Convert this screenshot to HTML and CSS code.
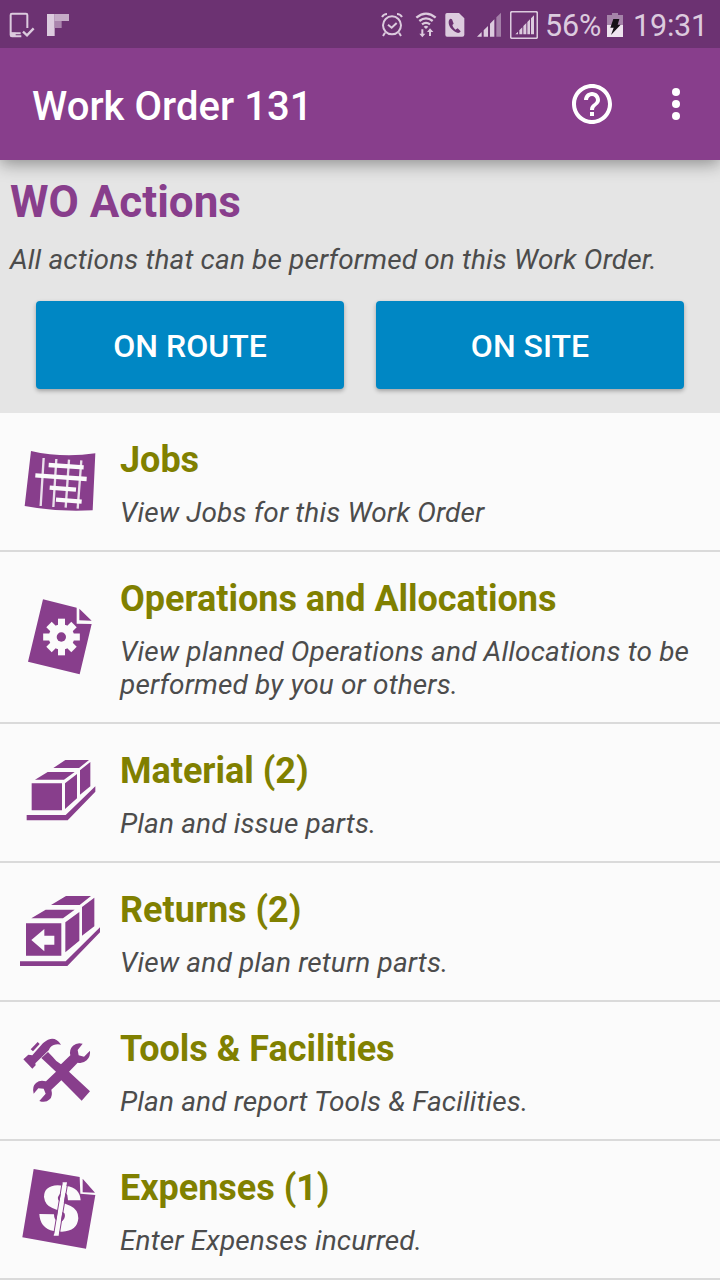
FILE: index.html
```html
<!DOCTYPE html>
<html lang="en">
<head>
<meta charset="utf-8">
<title>Work Order 131</title>
<link rel="stylesheet" href="styles.css">
</head>
<body>
<div class="status">
  <svg class="st-device" width="26" height="26" viewBox="28 36 78 78"><path d="M83 84V45q0-4-4-4H37q-4 0-4 4v60q0 4 4 4h28M33 100h30" fill="none" stroke="currentColor" stroke-width="6"/><path d="M33 98h15v11H33z" fill="currentColor"/><path d="M70 95l12 11 20-21" fill="none" stroke="currentColor" stroke-width="7"/></svg>
  <svg class="st-flip" width="22" height="22" viewBox="141 42 66 66"><path d="M141 42h23v66h-23z" fill="#dccbde"/><path d="M164 42h43v21h-43z" fill="#c5abc7"/><path d="M164 63h21v21h-21z" fill="#aa85ad"/></svg>
  <span class="spacer"></span>
  <svg class="st-alarm" width="24" height="26" viewBox="22 36 72 78"><g fill="none" stroke="currentColor" stroke-width="6"><circle cx="58" cy="76" r="27"/><path d="M28 51q5-9 15-9M88 51q-5-9-15-9"/><path d="M37 98l-6 10M79 98l6 10M46 74l11 9 15-14"/></g></svg>
  <svg class="st-wifi" width="24" height="26" viewBox="127 36 72 78"><g fill="none" stroke="currentColor" stroke-width="7"><path d="M134 53q29-24 58 0M143 63q20-16 40 0M151 73q12-9 24 0"/></g><path d="M156 80q7-6 14 0l-7 7zM149 88h6v13h6l-9 11-9-11h6zM172 108h6V96h7l-10-11-9 11h6z" fill="currentColor"/></svg>
  <svg class="st-sim" width="20" height="26" viewBox="221 36 60 78"><path d="M227 39h36l16 16v49q0 6-6 6h-46q-5 0-5-6V44q0-5 5-5z" fill="currentColor"/><path d="M237 56c-8 5-6 20 4 31s22 16 27 7l-9-9-7 4q-8-6-9-14l4-4-5-13z" fill="#6c3272"/></svg>
  <svg class="st-sig" width="26" height="26" viewBox="315 36 78 78"><path d="M318 110l14-14v14zM338 91l13-13v32h-13zM357 71l13-13v52h-13z" fill="currentColor"/><path d="M376 52l14-14v72h-14z" fill="currentColor" opacity=".5"/></svg>
  <svg class="st-sig2" width="28" height="28" viewBox="418 33 84 84"><rect x="420" y="35" width="80" height="80" rx="5" fill="none" stroke="currentColor" stroke-width="5"/><path d="M434 103l8-8v8zM446 91l9-9v21h-9zM458 78l9-9v34h-9zM470 66l8-8v45h-8zM481 55l9-9v57h-9z" fill="currentColor"/></svg>
  <span class="pct">56%</span>
  <svg class="st-bat" width="16" height="24" viewBox="231 39 48 72"><path d="M231 45h15v-6h18v6h15v30h-48z" fill="#a583a9"/><path d="M231 75h48v36h-48z" fill="#eee4ef"/><path d="M250 57h18l-5 17h9l-29 31 8-22h-10z" fill="#151116"/></svg>
  <span class="clock">19:31</span>
</div>
<header class="bar">
  <h1>Work Order 131</h1>
  <svg width="40" height="40" viewBox="2 2 20 20" class="help"><path fill="currentColor" d="M11 18h2v-2h-2v2zm1-16C6.480 2 2 6.480 2 12s4.480 10 10 10 10-4.480 10-10S17.520 2 12 2zm0 18c-4.410 0-8-3.590-8-8s3.590-8 8-8 8 3.590 8 8-3.590 8-8 8zm0-14c-2.210 0-4 1.790-4 4h2c0-1.100.9-2 2-2s2 .9 2 2c0 2-3 1.750-3 5h2c0-2.250 3-2.500 3-5 0-2.210-1.790-4-4-4z"/></svg>
  <svg width="8" height="32" viewBox="0 0 8 32" class="more"><g fill="currentColor"><circle cx="4" cy="4" r="4"/><circle cx="4" cy="16" r="4"/><circle cx="4" cy="28" r="4"/></g></svg>
</header>
<section class="actions">
  <h2>WO Actions</h2>
  <p class="desc">All actions that can be performed on this Work Order.</p>
  <div class="buttons"><button class="btn">ON ROUTE</button><button class="btn">ON SITE</button></div>
</section>
<main class="list">
  <article class="row">
    <svg class="icon" viewBox="30 33 240 240"><path d="M63 63q95 22 193 7l-8 171q-104 6-204-13z" fill="currentColor"/><g stroke="#fbfbfb" fill="none"><path d="M101 84L92 228M139 87l-9 144M177 89l-10 144M214 91l-11 145" stroke-width="7" opacity=".85"/><path d="M116 105l105 7M76 136l154 11M119 173l79 6M138 209l77 6" stroke-width="13"/></g></svg>
    <div class="text"><h3>Jobs</h3><p class="desc">View Jobs for this Work Order</p></div>
  </article>
  <article class="row tall">
    <svg class="icon" viewBox="30 36 240 240"><path d="M99 43l101 25v48l45 1-36 151-155-38zM208 71l37 36-37-1z" fill="currentColor"/><g fill="#fbfbfb"><circle cx="154.500" cy="156" r="38"/><path d="M144 101h21v110h-21z"/><path d="M143 103h23v106h-23z" transform="rotate(45 154.500 156)"/><path d="M144 101h21v110h-21z" transform="rotate(90 154.500 156)"/><path d="M143 103h23v106h-23z" transform="rotate(135 154.500 156)"/></g><circle cx="154" cy="156" r="14" fill="currentColor"/></svg>
    <div class="text"><h3>Operations and Allocations</h3><p class="desc">View planned Operations and Allocations to be performed by you or others.</p></div>
  </article>
  <article class="row">
    <svg class="icon" viewBox="30 21 240 240"><path d="M65 115h91v81H65zM75 104l38-23h81l-32 23zM165 115l36-28v73l-36 32zM130 69l36-24h71l-30 24zM210 76l31-25v73l-31 25zM50 210h117l89-86v16l-83 86H50z" fill="currentColor"/></svg>
    <div class="text"><h3>Material (2)</h3><p class="desc">Plan and issue parts.</p></div>
  </article>
  <article class="row">
    <svg class="icon" viewBox="30 18 240 240"><path d="M48 115h106v97H48zM64 100l43-26h87l-35 26zM166 112l42-31v86l-42 35zM123 60l45-27h75l-34 27zM216 66l37-28v86l-37 28zM30 229h137L270 127v15l-98 101H30z" fill="currentColor"/><path d="M64 165l39-33v20h30v27h-30v20z" fill="#fbfbfb"/></svg>
    <div class="text"><h3>Returns (2)</h3><p class="desc">View and plan return parts.</p></div>
  </article>
  <article class="row">
    <svg class="icon" viewBox="30 15 240 240"><path d="M40 103l15-14 12 2 25-29q15-17 29-20 18-4 32 17-20-4-33 9l-4 8-40 39 1 6-10 10zM62 73l21-22 6 6-20 22zM94 99l20-18 15 16q8 12 24 21l28-27q-4-18 8-29 12-11 29-6l-15 19 3 16 16 4 18-18q2 17-10 29-12 11-27 7l-26 27 63 59-25 28-61-61-30 28q5 19-5 29-12 12-31 5l19-22-6-15-16-1-14 16q-6-21 7-32 12-11 30-5l30-29z" fill="currentColor"/></svg>
    <div class="text"><h3>Tools &amp; Facilities</h3><p class="desc">Plan and report Tools &amp; Facilities.</p></div>
  </article>
  <article class="row">
    <svg class="icon" viewBox="30 27 240 240"><path d="M71 27l138 24 2 50 45 4-28 161-191-34zM218 56l37 42-37-1z" fill="currentColor"/><path d="M212 121q-3-39-43-43l-26-2q-41 2-41 35 3 25 25 33l35 14q5 6 1 17-7 15-20 9-11-5-11-21l-44-1q2 43 43 51l25 2q46-1 49-40 0-26-23-37l-34-14q-10-10 2-22 14-12 22 3l2 16z" fill="#fbfbfb"/><path d="M158 67h13l-25 160h-15z" fill="#fbfbfb"/><path d="M156 70l-25 153M173 70l-25 153" fill="none" stroke="currentColor" stroke-width="3"/></svg>
    <div class="text"><h3>Expenses (1)</h3><p class="desc">Enter Expenses incurred.</p></div>
  </article>
</main>
</body>
</html>
```
FILE: styles.css
```css
* { box-sizing: border-box; margin: 0; padding: 0; }
body { width: 720px; height: 1280px; overflow: hidden; background: #fbfbfb; font-family: Roboto, sans-serif; }
svg { display: block; flex: none; }
.status { position: relative; z-index: 2; height: 48px; background: #6c3272; color: #dccbde; display: flex; align-items: flex-start; padding: 12px 13px 0 9px; }
.spacer { flex: 1; }
.st-flip { margin: 2px 0 0 12px; }
.st-wifi { margin-left: 11px; }
.st-sim { margin-left: 7px; }
.st-sig { margin-left: 11px; }
.st-sig2 { margin: -1px 0 0 8px; }
.st-bat { margin: 1px 0 0 6px; }
.pct, .clock { font-size: 30.500px; line-height: 36px; margin-top: -4px; white-space: nowrap; }
.pct { margin-left: 7px; width: 56px; letter-spacing: -.2px; }
.clock { margin-left: 10px; width: 74px; letter-spacing: -.2px; }
.st-alarm { margin-right: -1px; }
.bar { height: 112px; background: #883e8c; color: #fff; display: flex; align-items: center; padding: 0 40px 0 32px; position: relative; box-shadow: 0 4px 16px rgba(0,0,0,.38); }
.bar h1 { font-size: 40px; font-weight: 500; line-height: 48px; flex: 1; padding-top: 6px; letter-spacing: .05px; }
.more { margin-left: 60px; }
.actions { height: 253px; background: #e5e5e5; padding: 16px 10px 0; }
.actions h2 { color: #883e8c; font-size: 44px; line-height: 52px; font-weight: 700; }
.actions .desc { margin-top: 15px; }
.desc { font-size: 28px; line-height: 33px; font-style: italic; color: #4c4c4c; letter-spacing: .15px; }
.buttons { display: flex; gap: 32px; padding: 0 26px; margin-top: 25px; }
.btn { flex: 1; height: 88px; border: 0; border-radius: 4px; background: #0087c4; color: #fff; font: 500 32px/40px Roboto, sans-serif; padding-top: 1px; box-shadow: 0 2px 4px rgba(0,0,0,.3); }
.row { display: flex; height: 139px; padding: 0 20px; gap: 20px; border-bottom: 2px solid #dadada; }
.tall { height: 172px; }
.icon { width: 80px; height: 80px; margin-top: 28px; color: #883e8c; }
.tall .icon { margin-top: 45px; }
.text { flex: 1; padding-top: 26px; }
.text h3 { color: #808000; font-size: 36px; line-height: 42px; font-weight: 700; letter-spacing: -.02px; }
.text .desc { margin-top: 15px; }
```
